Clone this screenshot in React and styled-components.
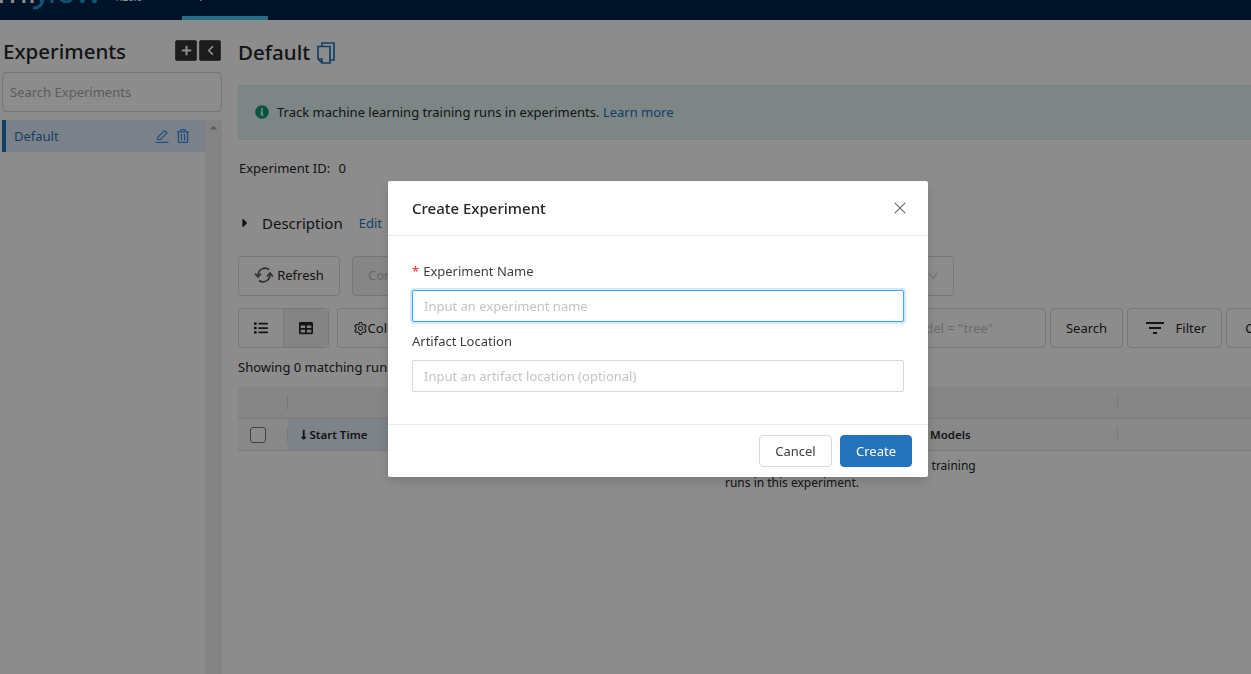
import React from 'react';
import styled, { createGlobalStyle } from 'styled-components';
import { AiOutlineSetting, AiOutlineDown } from 'react-icons/ai';
import { FaRegTrashAlt, FaList, FaTable, FaInfoCircle, FaLongArrowAltDown, FaPlus, FaChevronLeft, FaCaretRight, FaCaretUp } from 'react-icons/fa';
import { MdFilterList } from 'react-icons/md';
import { X } from 'lucide-react';

const Global = createGlobalStyle`
  html, body { margin: 0; height: 100%; overflow: hidden; }
  body { font-family: "Noto Sans", "Open Sans", sans-serif; font-size: 13px; color: #262626; background: #fff; }
  * { box-sizing: border-box; }
  input::placeholder { color: #c4c4c4; opacity: 1; }
`;

const Page = styled.div`
  width: 1251px;
  height: 674px;
  overflow: hidden;
`;

const Header = styled.header`
  height: 20px;
  background: #00224a;
  display: flex;
  align-items: flex-start;
  overflow: hidden;
  position: relative;
`;

const Logo = styled.span`
  width: 117px;
  margin: -20px 0 0 -3px;
  height: 40px;
  font-size: 33px;
  line-height: 22px;
  font-weight: 400;
  color: #fff;
  white-space: nowrap;
  flex: none;
  span { color: #1f95d6; }
`;

const LogoHook = styled.svg`
  position: absolute;
  left: 32px;
  top: 0;
  width: 14px;
  height: 10px;
`;

const Version = styled.span`
  width: 68px;
  margin-top: -20px;
  height: 40px;
  font-size: 10px;
  line-height: 35px;
  color: #fff;
  flex: none;
`;

const NavTab = styled.span`
  width: 86px;
  margin-top: -20px;
  height: 40px;
  border-bottom: 4px solid #43c9ed;
  padding-left: 3px;
  font-size: 13px;
  line-height: 27px;
  color: #fff;
  flex: none;
`;

const Body = styled.div`
  display: flex;
`;

const Sidebar = styled.aside`
  width: 238px;
  padding: 20px 16px 0 2px;
  flex: none;
`;

const SideHead = styled.div`
  display: flex;
  align-items: flex-start;
  height: 24px;
  justify-content: space-between;
  margin-bottom: 8px;
`;

const SideTitle = styled.h1`
  margin: -1px 0 0;
  font-size: 20.5px;
  font-weight: 500;
  color: #212529;
  padding-left: 1px;
  line-height: 24px;
`;

const SideButtons = styled.div`
  display: flex;
  gap: 2px;
  margin-right: 1px;
`;

const DarkButton = styled.button`
  width: 22px;
  height: 21px;
  padding: 0;
  border: 1px solid #555;
  border-radius: 2px;
  background: #333;
  color: #fff;
  font-size: 11px;
  display: flex;
  align-items: center;
  justify-content: center;
`;

const SearchBox = styled.input`
  display: block;
  width: 100%;
  height: 40px;
  border: 1px solid #d9d9d9;
  border-radius: 4px;
  padding: 0 7px;
  font: inherit;
  margin-bottom: 8px;
  background: transparent;
  &::placeholder { color: #a8a8a8; }
`;

const ListArea = styled.div`
  display: flex;
  height: 560px;
`;

const ListItems = styled.div`
  flex: 1;
`;

const ListRow = styled.div`
  height: 32px;
  display: flex;
  align-items: center;
  background: #e0ecf7;
  border-left: 4px solid #2374bb;
  padding: 0 15px 0 8px;
  color: #2374bb;
  font-size: 13px;
`;

const RowName = styled.span`
  flex: 1;
`;

const RowIcon = styled.span`
  display: flex;
  margin-left: 7px;
  font-size: 14px;
  color: #3b8cf0;
`;

const Scroll = styled.div`
  width: 17px;
  background: #f1f1f1;
  display: flex;
  justify-content: center;
  color: #a3a3a3;
  font-size: 11px;
  padding-top: 2px;
`;

const Main = styled.main`
  flex: 1;
  min-width: 0;
  padding-top: 20px;
`;

const Title = styled.h2`
  margin: 0;
  height: 25px;
  font-size: 20.5px;
  line-height: 25px;
  font-weight: 500;
  color: #212529;
  display: flex;
  align-items: center;
  gap: 7px;
`;

const CopyIcon = styled.svg`
  width: 18px;
  height: 22px;
  margin-top: 1px;
  fill: none;
  stroke: #2374bb;
  stroke-width: 1.7;
`;

const Alert = styled.div`
  margin-top: 20px;
  height: 55px;
  width: 1040px;
  background: #e3f3f3;
  border: 1px solid #d9eeee;
  border-radius: 3px;
  display: flex;
  align-items: center;
  padding: 0 16px 2px;
  gap: 8px;
  font-size: 13px;
  svg { color: #0a9d75; font-size: 14px; }
`;

const Link = styled.a`
  color: #2374bb;
`;

const Meta = styled.div`
  margin-top: 19px;
  height: 18px;
  line-height: 18px;
  font-size: 13px;
  padding-left: 1px;
  span { margin-left: 5px; }
`;

const Description = styled.div`
  margin-top: 34px;
  height: 24px;
  display: flex;
  align-items: center;
  font-size: 15px;
  svg { font-size: 14px; margin-right: 10px; color: #262626; }
`;

const EditLink = styled(Link)`
  margin-left: 16px;
  font-size: 13px;
`;

const Toolbar = styled.div`
  margin-top: ${p => p.$top}px;
  display: flex;
  height: 40px;
`;

const Btn = styled.button`
  height: 40px;
  width: ${p => p.$w}px;
  margin-left: ${p => p.$left || 0}px;
  flex: none;
  background: ${p => (p.$disabled ? '#f5f5f5' : '#fff')};
  color: ${p => (p.$disabled ? '#bfbfbf' : '#262626')};
  border: 1px solid #d9d9d9;
  border-radius: 4px;
  font: inherit;
  font-size: 13px;
  padding: 0 0 ${p => (p.$lift ? 2 : 0)}px ${p => p.$pad || 0}px;
  display: flex;
  align-items: center;
  justify-content: ${p => (p.$pad ? 'flex-start' : 'center')};
  gap: ${p => p.$gap || 0}px;
  white-space: nowrap;
`;

const SyncIcon = styled.svg`
  width: 20px;
  height: 18px;
  fill: none;
  stroke: #555;
  stroke-width: 1.6;
`;

const Segment = styled.div`
  width: 91px;
  height: 40px;
  display: flex;
  border: 1px solid #d9d9d9;
  border-radius: 4px;
  flex: none;
`;

const SegmentItem = styled.div`
  flex: 1;
  display: flex;
  align-items: center;
  justify-content: center;
  font-size: 14px;
  background: ${p => (p.$active ? '#f0f0f0' : 'transparent')};
  border-left: ${p => (p.$active ? '1px solid #d9d9d9' : 'none')};
`;

const FilterInput = styled.input`
  height: 40px;
  width: 334px;
  margin-left: 275px;
  border: 1px solid #d9d9d9;
  border-radius: 4px;
  flex: none;
  font: inherit;
  padding: 0 11px;
`;

const Showing = styled.div`
  margin-top: 10px;
  height: 18px;
  line-height: 18px;
  font-size: 13px;
`;

const Table = styled.div`
  margin-top: 11px;
  font-size: 11.5px;
`;

const GroupRow = styled.div`
  height: 31px;
  background: #f4f4f4;
  display: flex;
  align-items: center;
`;

const ColRow = styled.div`
  height: 33px;
  background: #f7f7f7;
  display: flex;
  align-items: center;
  border-top: 1px solid #ddd;
  border-bottom: 1px solid #ddd;
  font-weight: 600;
`;

const Cell = styled.div`
  width: ${p => p.$w}px;
  height: 100%;
  flex: none;
  display: flex;
  align-items: center;
  background: ${p => (p.$sorted ? '#e3eef8' : 'transparent')};
  padding-left: ${p => p.$pad || 0}px;
  position: relative;
  &::after {
    content: '';
    display: ${p => (p.$sep ? 'block' : 'none')};
    position: absolute;
    right: 0;
    top: 8px;
    bottom: 8px;
    width: 1px;
    background: #ddd;
  }
`;

const Check = styled.span`
  width: 16px;
  height: 16px;
  border: 1px solid #777;
  border-radius: 3px;
  background: #fff;
`;

const Empty = styled.div`
  width: 370px;
  margin: 6px 0 0 369px;
  text-align: center;
  font-size: 12px;
  line-height: 17px;
  color: #262626;
`;

const EmptyFirst = styled.span`
  display: block;
  padding-left: 8px;
`;

const Mask = styled.div`
  position: fixed;
  inset: 0;
  background: rgba(0, 0, 0, 0.45);
  padding: 181px 0 0 388px;
`;

const Modal = styled.div`
  width: 540px;
  height: 296px;
  background: #fff;
  border-radius: 2px;
  box-shadow: 0 4px 12px rgba(0, 0, 0, 0.15);
`;

const ModalHead = styled.div`
  height: 55px;
  border-bottom: 1px solid #e8e8e8;
  padding: 0 18px 0 24px;
  display: flex;
  align-items: center;
  justify-content: space-between;
  font-size: 15px;
  font-weight: 500;
  color: #262626;
  svg { color: #777; }
`;

const ModalBody = styled.div`
  height: 188px;
  padding: 25px 24px 0;
`;

const Label = styled.label`
  display: block;
  font-size: 13px;
  line-height: 20px;
  height: 20px;
  margin-bottom: 9px;
  color: #404040;
`;

const Req = styled.span`
  color: #f5222d;
  margin-right: 4px;
`;

const TextInput = styled.input`
  display: block;
  width: 492px;
  height: 32px;
  border: 1px solid ${p => (p.$focus ? '#40a9ff' : '#d9d9d9')};
  box-shadow: ${p => (p.$focus ? '0 0 0 2px rgba(24, 144, 255, 0.2)' : 'none')};
  border-radius: 2px;
  padding: 0 11px;
  font: inherit;
  margin-bottom: 9px;
  outline: none;
`;

const ModalFoot = styled.div`
  border-top: 1px solid #e8e8e8;
  height: 53px;
  padding: 10px 16px 0;
  display: flex;
  justify-content: flex-end;
  gap: 8px;
`;

const FootBtn = styled.button`
  height: 32px;
  width: ${p => p.$w}px;
  border-radius: 4px;
  border: 1px solid ${p => (p.$primary ? '#2374bb' : '#d9d9d9')};
  background: ${p => (p.$primary ? '#2374bb' : '#fff')};
  color: ${p => (p.$primary ? '#fff' : '#404040')};
  font: inherit;
  font-size: 13px;
  padding: 0;
`;

const EditIcon = () => (
  <svg width="14" height="14" viewBox="0 0 14 14" fill="none" stroke="currentColor" strokeWidth="1.2">
    <path d="M2.5 10.5 L3 8 L9.5 1.5 L12 4 L5.5 10.5 Z" />
    <path d="M0.5 13.4 H13.5" />
  </svg>
);

export default function App() {
  return (
    <Page>
      <Global />
      <Header>
        <Logo>ml<span>flow</span></Logo>
        <LogoHook viewBox="0 0 14 10" fill="none" stroke="#1f95d6" strokeWidth="3">
          <path d="M11 0 C10 6 6 8 1 8" />
        </LogoHook>
        <Version>1.26.0</Version>
        <NavTab>Experiments</NavTab>
      </Header>
      <Body>
        <Sidebar>
          <SideHead>
            <SideTitle>Experiments</SideTitle>
            <SideButtons>
              <DarkButton><FaPlus /></DarkButton>
              <DarkButton><FaChevronLeft /></DarkButton>
            </SideButtons>
          </SideHead>
          <SearchBox placeholder="Search Experiments" />
          <ListArea>
            <ListItems>
              <ListRow>
                <RowName>Default</RowName>
                <RowIcon><EditIcon /></RowIcon>
                <RowIcon><FaRegTrashAlt /></RowIcon>
              </ListRow>
            </ListItems>
            <Scroll><FaCaretUp /></Scroll>
          </ListArea>
        </Sidebar>
        <Main>
          <Title>
            Default
            <CopyIcon viewBox="0 0 18 22">
              <path d="M5 4 V1 H17 V18 H13" />
              <path d="M1 4.5 H13 V21 H5 L1 17 Z" />
              <path d="M1 17 H5 V21" />
            </CopyIcon>
          </Title>
          <Alert>
            <FaInfoCircle />
            <span>Track machine learning training runs in experiments. <Link>Learn more</Link></span>
          </Alert>
          <Meta>Experiment ID:<span>&nbsp;0</span></Meta>
          <Description>
            <FaCaretRight />
            Description
            <EditLink>Edit</EditLink>
          </Description>
          <Toolbar $top={21}>
            <Btn $w={102} $gap={3} $lift>
              <SyncIcon viewBox="0 0 20 18">
                <path d="M15 3.5 A7 7 0 0 0 4 9.5" />
                <path d="M1 7.5 L4 11 L7 7.5" />
                <path d="M5 14.5 A7 7 0 0 0 16 8.5" />
                <path d="M13 10.5 L16 7 L19 10.5" />
              </SyncIcon>
              Refresh
            </Btn>
            <Btn $w={200} $left={12} $disabled $pad={15} $lift>Compare</Btn>
            <Btn $w={390} $left={12}>
              <AiOutlineDown size={12} color="#bfbfbf" style={{ marginLeft: 'auto', marginRight: 14 }} />
            </Btn>
          </Toolbar>
          <Toolbar $top={12}>
            <Segment>
              <SegmentItem><FaList /></SegmentItem>
              <SegmentItem $active><FaTable /></SegmentItem>
            </Segment>
            <Btn $w={100} $left={8}><AiOutlineSetting size={15} />Columns</Btn>
            <FilterInput placeholder='metrics.rmse < 1 and params.model = "tree"' />
            <Btn $w={73} $left={4}>Search</Btn>
            <Btn $w={95} $left={4} $gap={9}><MdFilterList size={24} />Filter</Btn>
            <Btn $w={70} $left={4}>Clear</Btn>
          </Toolbar>
          <Showing>Showing 0 matching runs</Showing>
          <Table>
            <GroupRow>
              <Cell $w={50} $sep />
              <Cell $w={830} $sep />
            </GroupRow>
            <ColRow>
              <Cell $w={50} $sep $pad={12}><Check /></Cell>
              <Cell $w={120} $sorted $pad={10}><FaLongArrowAltDown />Start Time</Cell>
              <Cell $w={710} $sep $pad={522}>Models</Cell>
            </ColRow>
            <Empty>
              <EmptyFirst>No runs yet. Learn more about how to create ML model training</EmptyFirst>
              runs in this experiment.
            </Empty>
          </Table>
        </Main>
      </Body>
      <Mask>
        <Modal>
          <ModalHead>Create Experiment<X size={20} strokeWidth={1.3} /></ModalHead>
          <ModalBody>
            <Label><Req>*</Req>Experiment Name</Label>
            <TextInput $focus placeholder="Input an experiment name" />
            <Label>Artifact Location</Label>
            <TextInput placeholder="Input an artifact location (optional)" />
          </ModalBody>
          <ModalFoot>
            <FootBtn $w={73}>Cancel</FootBtn>
            <FootBtn $w={72} $primary>Create</FootBtn>
          </ModalFoot>
        </Modal>
      </Mask>
    </Page>
  );
}
